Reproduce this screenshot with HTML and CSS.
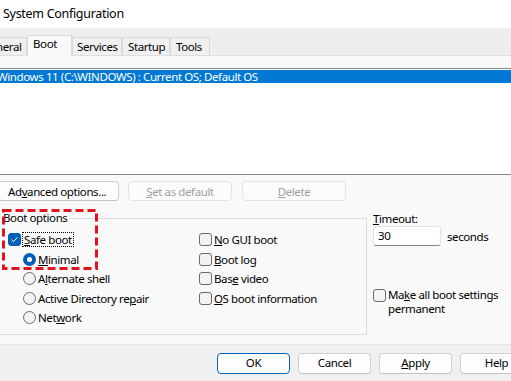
FILE: index.html
```html
<!doctype html>
<html lang="en">
<head>
    <meta charset="UTF-8">
    <title>System Configuration</title>
    <link rel="stylesheet" href="styles.css">
</head>
<body>
    <div class="titlebar">System Configuration</div>

    <div class="tabs">
        <div class="tab tab--general">General</div>
        <div class="tab tab--active">Boot</div>
        <div class="tab tab--services">Services</div>
        <div class="tab tab--startup">Startup</div>
        <div class="tab tab--tools">Tools</div>
    </div>

    <section class="panel">
        <div class="oslist">
            <div class="oslist__item oslist__item--selected">Windows 11 (C:\WINDOWS) : Current OS; Default OS</div>
        </div>

        <div class="actions">
            <button type="button" class="btn btn--advanced">Ad<u>v</u>anced options...</button>
            <button type="button" class="btn btn--wide" disabled><u>S</u>et as default</button>
            <button type="button" class="btn btn--wide" disabled><u>D</u>elete</button>
        </div>

        <div class="lower">
            <fieldset class="group">
                <legend>Boot options</legend>
                <div class="group__cols">
                    <div class="col col--left">
                        <div class="opt">
                            <span class="check check--on">
                                <svg width="13" height="13" viewBox="0 0 13 13"><path d="M3.5 6.8 L5.4 8.6 L9.5 4.4" fill="none" stroke="#fff" stroke-width="1"/></svg>
                            </span>
                            <span class="focus"><u>S</u>afe boot</span>
                        </div>
                        <div class="opt opt--indent"><span class="radio radio--on"></span><span><u>M</u>inimal</span></div>
                        <div class="opt opt--indent"><span class="radio"></span><span>A<u>l</u>ternate shell</span></div>
                        <div class="opt opt--indent"><span class="radio"></span><span>Active Directory re<u>p</u>air</span></div>
                        <div class="opt opt--indent"><span class="radio"></span><span>Net<u>w</u>ork</span></div>
                    </div>
                    <div class="col col--right">
                        <div class="opt"><span class="check"></span><span><u>N</u>o GUI boot</span></div>
                        <div class="opt"><span class="check"></span><span><u>B</u>oot log</span></div>
                        <div class="opt"><span class="check"></span><span>Bas<u>e</u> video</span></div>
                        <div class="opt"><span class="check"></span><span><u>O</u>S boot information</span></div>
                    </div>
                </div>
            </fieldset>

            <div class="timeout">
                <div class="timeout__label"><u>T</u>imeout:</div>
                <div class="timeout__row">
                    <div class="input">30</div>
                    <span>seconds</span>
                </div>
                <div class="opt opt--wrap">
                    <span class="check"></span>
                    <span>Ma<u>k</u>e all boot settings<br>permanent</span>
                </div>
            </div>
        </div>
    </section>

    <div class="footer">
        <button type="button" class="btn btn--footer btn--default">OK</button>
        <button type="button" class="btn btn--footer">Cancel</button>
        <button type="button" class="btn btn--footer"><u>A</u>pply</button>
        <button type="button" class="btn btn--footer">Help</button>
    </div>

    <!-- red annotation box drawn over the dialog -->
    <svg class="highlight" width="96" height="61" viewBox="0 0 96 61">
        <rect x="1.5" y="1.5" width="93" height="58" fill="none" stroke="#e0141e" stroke-width="3" stroke-dasharray="8 4"/>
    </svg>
</body>
</html>
```

FILE: styles.css
```css
body {
    margin: 0;
    width: 511px;
    height: 381px;
    overflow: hidden;
    position: relative;
    background: #f0f0f0;
    font-family: "Noto Sans", "Open Sans", sans-serif;
    font-size: 11.5px;
    letter-spacing: -0.4px;
    color: #000;
}

u {
    text-decoration: underline;
    text-underline-offset: 1px;
}

.titlebar {
    height: 28px;
    line-height: 27px;
    padding-left: 3px;
    background: #fff;
    font-size: 12.5px;
    letter-spacing: -0.3px;
}

/* tabs */

.tabs {
    height: 27px;
    display: flex;
    align-items: flex-end;
    background: #eeeeee;
    margin-left: -20px;
}

.tab {
    height: 18px;
    line-height: 17px;
    box-sizing: border-box;
    border: 1px solid #d9d9d9;
    border-bottom: none;
    background: #f0f0f0;
    padding-left: 5px;
    white-space: nowrap;
    overflow: hidden;
}

.tab--general {
    width: 47px;
    padding-left: 1px;
}

.tab--active {
    width: 45px;
    height: 21px;
    line-height: 16px;
    padding-left: 5px;
    background: #f9f9f9;
    border-color: #dadada;
    margin-bottom: -1px;
    position: relative;
    z-index: 1;
}

.tab--services {
    width: 50px;
    padding-left: 4px;
}

.tab--startup {
    width: 48px;
}

.tab--tools {
    width: 40px;
}

/* boot panel */

.panel {
    background: #f9f9f9;
    border-top: 1px solid #dedede;
    border-bottom: 1px solid #e5e5e5;
    padding: 12px 0 9px 0;
}

.oslist {
    margin: 0 -10px;
    height: 104px;
    border-top: 1px solid #828790;
    border-bottom: 1px solid #828790;
    background: #fff;
    padding-top: 1px;
    box-sizing: content-box;
}

.oslist__item {
    height: 13px;
    line-height: 13px;
    padding-left: 7px;
    white-space: nowrap;
}

.oslist__item--selected {
    background: #0078d4;
    color: #fff;
}

.actions {
    display: flex;
    margin-top: 6px;
    margin-left: -2px;
}

.btn {
    height: 20px;
    box-sizing: border-box;
    padding: 0;
    border: 1px solid #d0d0d0;
    border-bottom-color: #c4c4c4;
    border-radius: 4px;
    background: #fdfdfd;
    font-family: inherit;
    font-size: inherit;
    letter-spacing: inherit;
    color: #000;
    line-height: 17px;
}

.btn--advanced {
    width: 121px;
    text-align: left;
    padding-left: 9px;
}

.btn--wide {
    width: 104px;
    margin-left: 9px;
}

.btn--wide + .btn--wide {
    margin-left: 10px;
}

.btn:disabled {
    color: #a0a0a0;
    border-color: #e3e3e3;
    background: #fbfbfb;
}

/* options */

.lower {
    display: flex;
    margin-top: 10px;
}

.group {
    margin: 0 0 0 -10px;
    padding: 0;
    width: 377px;
    box-sizing: border-box;
    border: 1px solid #dcdcdc;
}

.group legend {
    margin-left: 10px;
    padding: 0 2px;
    line-height: 14px;
}

.group__cols {
    display: flex;
    padding: 5px 0 6px 17px;
}

.col--left {
    width: 191px;
}

.opt {
    height: 19.5px;
    display: flex;
    align-items: center;
    gap: 2px;
    white-space: nowrap;
}

.opt--indent {
    padding-left: 15px;
}

.check,
.radio {
    width: 13px;
    height: 13px;
    box-sizing: border-box;
    border: 1px solid #6b6b6b;
    background: #f3f3f3;
    flex-shrink: 0;
}

.check {
    border-radius: 3px;
}

.check--on {
    background: #005fb8;
    border-color: #005fb8;
    display: flex;
    align-items: center;
    justify-content: center;
}

.check--on svg {
    display: block;
    margin: -1px;
}

.radio {
    border-radius: 50%;
}

.radio--on {
    border: 4px solid #005fb8;
    background: #fff;
}

.focus {
    outline: 1px dotted #000;
    outline-offset: 0;
    padding: 0 1px;
    line-height: 13px;
}

/* timeout column */

.timeout {
    margin-left: 6px;
    padding-top: 1px;
}

.timeout__label {
    line-height: 14px;
}

.timeout__row {
    display: flex;
    align-items: center;
    gap: 6px;
}

.input {
    width: 68px;
    height: 20px;
    box-sizing: border-box;
    border: 1px solid #e3e3e3;
    border-bottom-color: #868686;
    border-radius: 3px;
    background: #fff;
    padding-left: 4px;
    line-height: 18px;
}

.opt--wrap {
    height: auto;
    align-items: flex-start;
    margin-top: 42px;
    line-height: 13.5px;
}

.opt--wrap .check {
    margin-top: 1px;
}

/* footer */

.footer {
    display: flex;
    gap: 8px;
    padding: 8px 0 0 217px;
}

.btn--footer {
    width: 73px;
    height: 21px;
    flex-shrink: 0;
    line-height: 18px;
}

.btn--default {
    border-color: #0067c0;
}

.highlight {
    position: absolute;
    left: 2px;
    top: 209px;
}
```
